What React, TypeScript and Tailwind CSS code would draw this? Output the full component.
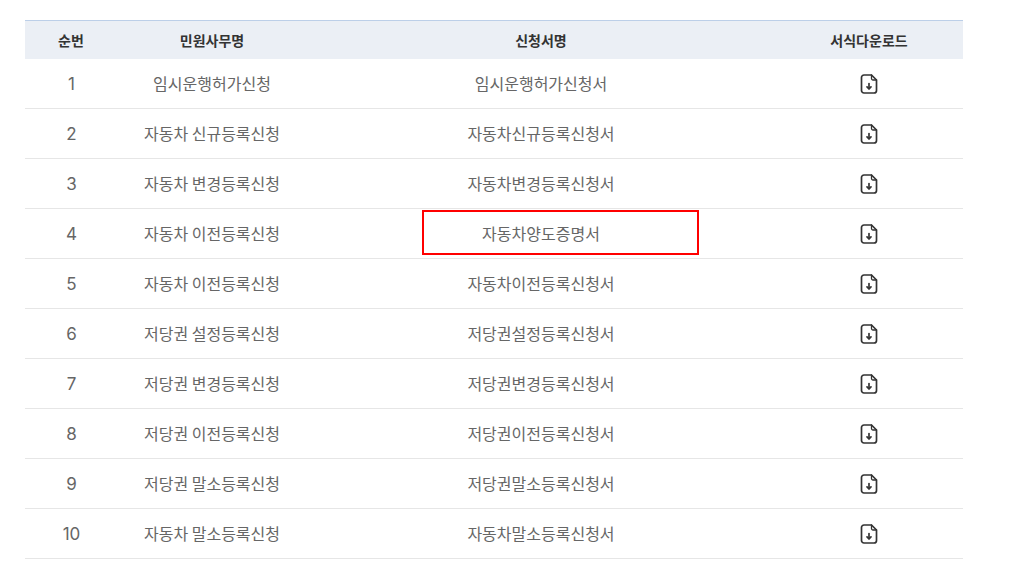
const rows = [
  { no: 1, name: '임시운행허가신청', form: '임시운행허가신청서' },
  { no: 2, name: '자동차 신규등록신청', form: '자동차신규등록신청서' },
  { no: 3, name: '자동차 변경등록신청', form: '자동차변경등록신청서' },
  { no: 4, name: '자동차 이전등록신청', form: '자동차양도증명서', marked: true },
  { no: 5, name: '자동차 이전등록신청', form: '자동차이전등록신청서' },
  { no: 6, name: '저당권 설정등록신청', form: '저당권설정등록신청서' },
  { no: 7, name: '저당권 변경등록신청', form: '저당권변경등록신청서' },
  { no: 8, name: '저당권 이전등록신청', form: '저당권이전등록신청서' },
  { no: 9, name: '저당권 말소등록신청', form: '저당권말소등록신청서' },
  { no: 10, name: '자동차 말소등록신청', form: '자동차말소등록신청서' },
];

function FileDownload() {
  return (
    <svg width="18" height="20" viewBox="0 0 18 20" fill="none" stroke="#333" strokeWidth="1.7" strokeLinecap="round" strokeLinejoin="round">
      <path d="M4 1h7.500l5 5v10.500A2.500 2.500 0 0 1 14 19H4a2.500 2.500 0 0 1-2.500-2.500v-13A2.500 2.500 0 0 1 4 1Z" />
      <path d="M11.500 1v3.500a1.500 1.500 0 0 0 1.500 1.500h3.500" strokeWidth="1.300" />
      <path d="M9 9.500v5" />
      <path d="M7 12.800 9 14.800l2-2" />
    </svg>
  );
}

export default function App() {
  return (
    <div className="w-[1024px] h-[572px] overflow-hidden bg-white pt-5 pl-[25px] font-['Noto_Sans_CJK_KR','Noto_Sans',sans-serif]">
      <div className="w-[938px]">
        <div className="grid grid-cols-[92px_190px_468px_188px] h-[39px] items-center border-t border-[#bccfe8] bg-[#ebeff5] text-center text-[14px] font-bold text-[#333]">
          <div>순번</div>
          <div>민원사무명</div>
          <div>신청서명</div>
          <div>서식다운로드</div>
        </div>
        {rows.map((row) => (
          <div key={row.no} className="grid grid-cols-[92px_190px_468px_188px] h-[50px] items-center border-b border-[#e6e6e6] text-center text-[16px] text-[#666]">
            <div className="font-['Inter','Noto_Sans',sans-serif] text-[17px] pl-px pt-[2px]">{row.no}</div>
            <div className="pb-[2px]">{row.name}</div>
            <div className="relative pb-[2px]">
              {row.form}
              {row.marked && (
                <div className="absolute left-[115px] top-[-11px] h-[45px] w-[277px] border-2 border-[#ff0000]" />
              )}
            </div>
            <div className="flex justify-center">
              <FileDownload />
            </div>
          </div>
        ))}
      </div>
    </div>
  );
}
